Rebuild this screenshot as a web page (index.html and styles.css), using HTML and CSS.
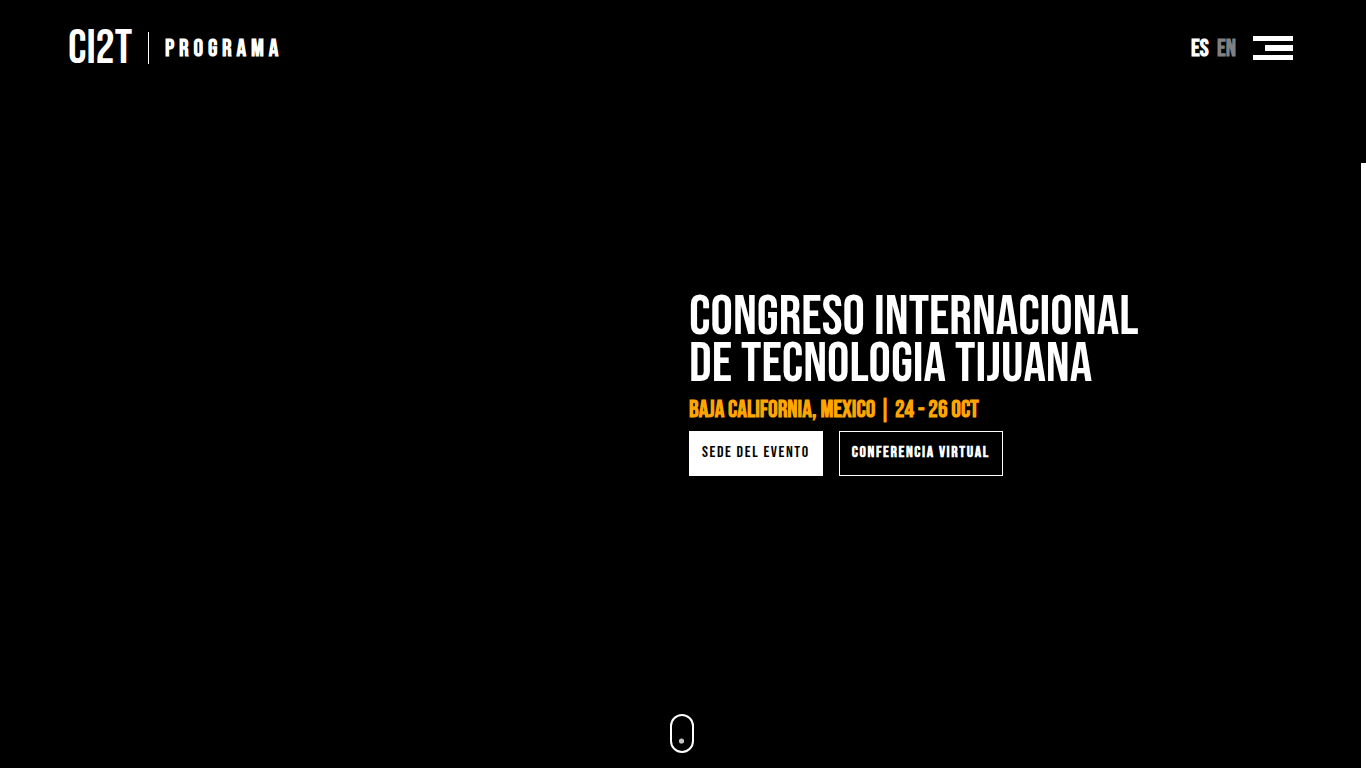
FILE: index.html
```html
<!DOCTYPE html>
<html lang="es">
<head>
<meta charset="utf-8">
<meta name="viewport" content="width=device-width, initial-scale=1">
<title>CI2T</title>
<link rel="stylesheet" href="styles.css">
</head>
<body>
<div class="page">
  <header class="header">
    <a class="logo" href="#">CI2T</a>
    <a class="program" href="#programa">PROGRAMA</a>
    <nav class="languages" aria-label="Idioma">
      <a class="language" href="#es">ES</a>
      <a class="language language-muted" href="#en">EN</a>
    </nav>
    <button class="menu" type="button" aria-label="Menú">
      <span class="menu-bar"></span>
      <span class="menu-bar menu-bar-short"></span>
      <span class="menu-bar"></span>
    </button>
  </header>
  <main class="hero">
    <section class="intro">
      <h1 class="title">CONGRESO INTERNACIONAL<br>DE TECNOLOGIA TIJUANA</h1>
      <p class="place">BAJA CALIFORNIA, MEXICO | 24 - 26 OCT</p>
      <div class="actions">
        <a class="action action-solid" href="#sede">SEDE DEL EVENTO</a>
        <a class="action action-outline" href="#virtual">CONFERENCIA VIRTUAL</a>
      </div>
    </section>
  </main>
  <footer class="footer">
    <a class="scroll-hint" href="#programa" aria-label="Bajar">
      <svg width="24" height="39" viewBox="0 0 24 39" aria-hidden="true">
        <rect x="1" y="1" width="22" height="37" rx="11" fill="none" stroke="#fff" stroke-width="2"/>
        <circle cx="11.5" cy="27" r="2.6" fill="#c4c4c4"/>
      </svg>
    </a>
  </footer>
  <div class="scroll-track"></div>
</div>
</body>
</html>
```
FILE: styles.css
```css
* {
  box-sizing: border-box;
}

body {
  margin: 0;
  background: #000;
  color: #fff;
  font-family: "Bebas Neue", "Open Sans Condensed", "Liberation Sans Narrow", Roboto, sans-serif;
}

a {
  color: inherit;
  text-decoration: none;
}

.page {
  position: relative;
  display: grid;
  grid-template-rows: 96px 1fr 96px;
  min-height: 100vh;
}

.header {
  display: flex;
  align-items: center;
  padding: 0 73px 0 68px;
}

.logo {
  width: 80px;
  padding-top: 2px;
  font-size: 48px;
  line-height: 48px;
}

.program {
  border-left: 1px solid #fff;
  padding: 2px 0 0 16px;
  font-size: 24px;
  font-weight: 700;
  line-height: 30px;
  letter-spacing: 0.2em;
}

.languages {
  display: flex;
  gap: 7px;
  margin-left: auto;
  padding-top: 2px;
  font-size: 24px;
  font-weight: 700;
  line-height: 32px;
}

.language {
  width: 19px;
}

.language-muted {
  color: #808080;
}

.menu {
  display: flex;
  flex-direction: column;
  align-items: flex-end;
  gap: 4px;
  width: 40px;
  margin-left: 17px;
  border: 0;
  padding: 0;
  background: none;
}

.menu-bar {
  width: 100%;
  height: 5px;
  background: #fff;
}

.menu-bar-short {
  width: 28px;
  height: 6px;
}

.hero {
  display: grid;
  grid-template-columns: 1fr 1fr;
  align-items: center;
}

.intro {
  grid-column: 2;
  padding: 2px 0 0 6px;
}

.title {
  margin: 0;
  font-size: 56px;
  font-weight: 400;
  line-height: 47px;
  white-space: nowrap;
}

.place {
  margin: 0;
  color: #ffa500;
  font-size: 24px;
  font-weight: 700;
  line-height: 43px;
}

.actions {
  display: flex;
  gap: 16px;
}

.action {
  border: 1px solid #fff;
  padding: 0 12px 2px;
  font-size: 16px;
  line-height: 41px;
  letter-spacing: 0.1em;
  white-space: nowrap;
}

.action-solid {
  background: #fff;
  color: #000;
}

.action-outline {
  font-weight: 700;
}

.footer {
  display: flex;
  justify-content: center;
  align-items: flex-end;
  padding: 0 2px 15px 0;
}

.scroll-hint {
  display: flex;
}

.scroll-track {
  position: absolute;
  top: 163px;
  right: 0;
  bottom: 0;
  width: 5px;
  background: #fff;
}
```
